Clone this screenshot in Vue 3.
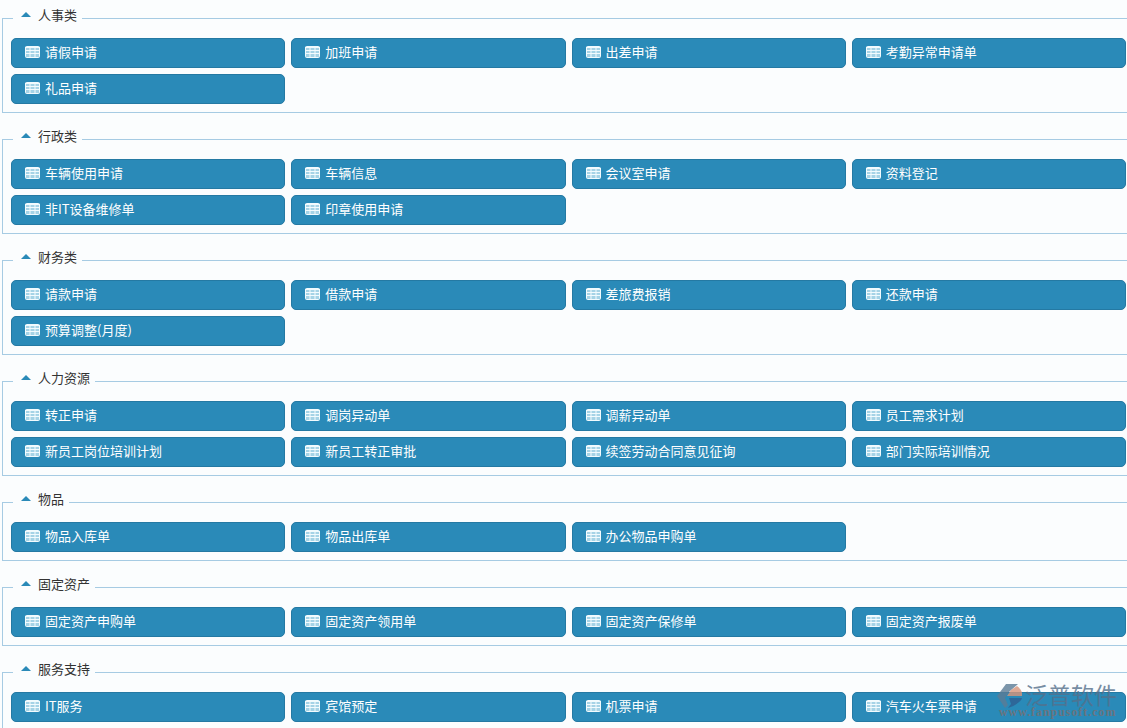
<script setup>
const groups = [
  { title: '人事类', items: ['请假申请', '加班申请', '出差申请', '考勤异常申请单', '礼品申请'] },
  { title: '行政类', items: ['车辆使用申请', '车辆信息', '会议室申请', '资料登记', '非IT设备维修单', '印章使用申请'] },
  { title: '财务类', items: ['请款申请', '借款申请', '差旅费报销', '还款申请', '预算调整(月度)'] },
  { title: '人力资源', items: ['转正申请', '调岗异动单', '调薪异动单', '员工需求计划', '新员工岗位培训计划', '新员工转正审批', '续签劳动合同意见征询', '部门实际培训情况'] },
  { title: '物品', items: ['物品入库单', '物品出库单', '办公物品申购单'] },
  { title: '固定资产', items: ['固定资产申购单', '固定资产领用单', '固定资产保修单', '固定资产报废单'] },
  { title: '服务支持', items: ['IT服务', '宾馆预定', '机票申请', '汽车火车票申请'] },
]
</script>

<template>
  <div class="page">
    <fieldset v-for="g in groups" :key="g.title" class="group">
      <legend class="legend">
        <span class="caret"></span>
        <span>{{ g.title }}</span>
      </legend>
      <div class="grid">
        <button v-for="item in g.items" :key="item" class="btn" type="button">
          <svg class="icon" viewBox="0 0 15 12" width="15" height="12" aria-hidden="true">
            <rect x="0.5" y="0.5" width="14" height="11" rx="1" fill="#a5d3e6" stroke="#f2fbfe" />
            <path d="M0 1.5H15M0 4.5H15M0 7.5H15M5 1V12M10 1V12" fill="none" stroke="#f2fbfe" />
          </svg>
          <span class="label">{{ item }}</span>
        </button>
      </div>
    </fieldset>

    <div class="mark">
      <svg class="mark-logo" viewBox="0 0 25 24" width="25" height="24" aria-hidden="true">
        <path d="M9 0H21L12 8L8 14L11 21L8 24L0 12Z" fill="#5c7c96" />
        <path d="M20 2C24 5 26 9 25 12H10L14 6Z" fill="#d9957a" />
        <path d="M12 14H25C24 18 17 22 11 24L14 20Z" fill="#2f5f92" />
      </svg>
      <div class="mark-cn">泛普软件</div>
      <div class="mark-en">www.fanpusoft.com</div>
    </div>
  </div>
</template>

<style scoped>
.page {
  position: relative;
  width: 1127px;
  height: 728px;
  overflow: hidden;
  padding: 8px 0 0 2px;
  box-sizing: border-box;
  background: #fbfdfe;
  font-family: "Noto Sans CJK SC", "Liberation Sans", sans-serif;
}
.group {
  margin: 0 0 16px;
  padding: 10px 1px 8px 8px;
  border: 1px solid #a6cbe3;
  border-right: 0;
  min-width: 0;
}
.legend {
  display: flex;
  align-items: center;
  box-sizing: border-box;
  height: 20px;
  margin-left: 2px;
  padding: 0 5px 8px 8px;
  font-size: 13px;
  color: #333;
}
.caret {
  width: 0;
  height: 0;
  margin-right: 7px;
  border-left: 5px solid transparent;
  border-right: 5px solid transparent;
  border-bottom: 5px solid #2a8ab8;
}
.grid {
  display: grid;
  grid-template-columns: repeat(4, 1fr);
  gap: 6px;
}
.btn {
  display: flex;
  align-items: center;
  gap: 5px;
  height: 30px;
  margin: 0;
  padding: 0 0 2px 13px;
  box-sizing: border-box;
  border: 1px solid #2479a3;
  border-radius: 5px;
  background: #2a8ab8;
  color: #fff;
  font: inherit;
  font-size: 13px;
  text-align: left;
}
.icon {
  flex: none;
}
.label {
  padding-bottom: 2px;
}
.mark {
  position: absolute;
  left: 997px;
  top: 684px;
  display: grid;
  grid-template-columns: 25px auto;
  column-gap: 3px;
  opacity: 0.8;
  pointer-events: none;
}
.mark-cn {
  font-size: 23px;
  line-height: 21px;
  color: #55708c;
}
.mark-en {
  grid-column: 1 / 3;
  margin: -1px 0 0 2px;
  font-family: "Liberation Serif", serif;
  font-weight: bold;
  font-size: 12px;
  line-height: 11px;
  letter-spacing: 0.94px;
  color: #7a6f70;
}
</style>
